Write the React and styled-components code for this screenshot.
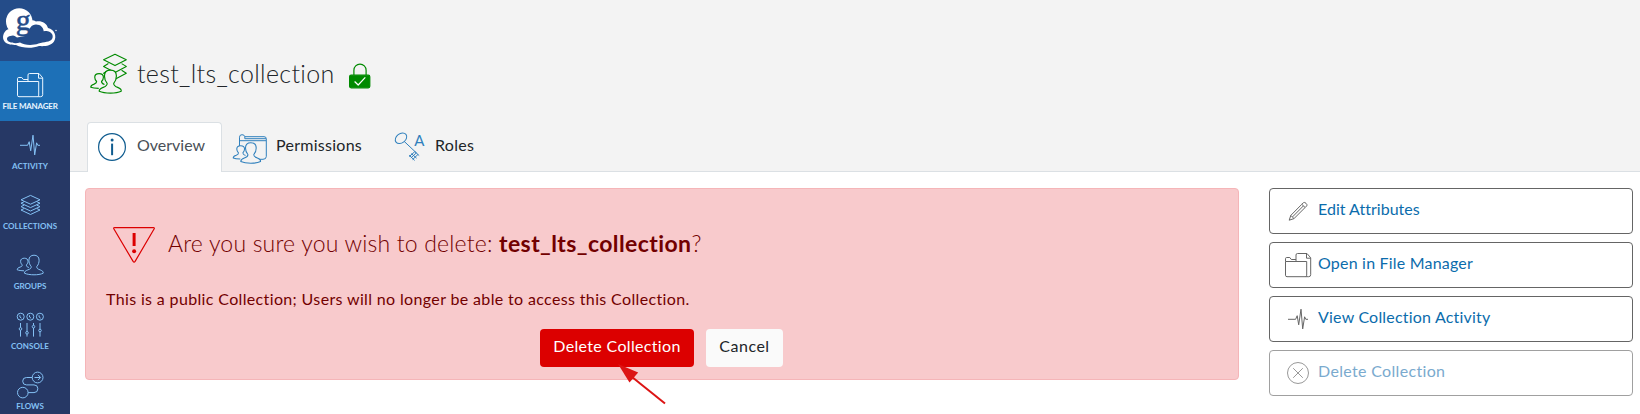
import React from 'react';
import styled, { createGlobalStyle } from 'styled-components';

const GlobalStyle = createGlobalStyle`
  *, *::before, *::after { box-sizing: border-box; }
  body {
    margin: 0;
    background: #fff;
    font-family: Lato, "Noto Sans", sans-serif;
    font-size: 16px;
    font-variant-ligatures: none;
    color: #212529;
    overflow: hidden;
  }
`;

const Page = styled.div`
  display: flex;
  width: 100%;
  height: 414px;
  overflow: hidden;
`;

const Sidebar = styled.nav`
  flex: 0 0 70px;
  background: #263865;
`;

const LogoLink = styled.div`
  height: 61px;
  background: #244c89;
`;

const NavItem = styled.div`
  display: flex;
  flex-direction: column;
  align-items: center;
  height: 60px;
  padding: 9px 10px 0 0;
  background: ${(p) => (p.$active ? '#1d70b7' : 'transparent')};
  color: ${(p) => (p.$active ? '#eaf5ff' : '#84c1f5')};
`;

const NavLabel = styled.span`
  margin-top: 1px;
  font-size: 8px;
  line-height: 10px;
  font-weight: 700;
  letter-spacing: ${(p) => p.$spacing || 0}px;
  white-space: nowrap;
`;

const Icon = styled.svg`
  display: block;
  flex: none;
  fill: none;
  stroke: ${(p) => p.$color || 'currentColor'};
  stroke-width: ${(p) => p.$weight || 1};
  stroke-linejoin: round;
`;

const Main = styled.main`
  flex: 1;
  min-width: 0;
`;

const Header = styled.header`
  display: flex;
  flex-direction: column;
  justify-content: space-between;
  height: 172px;
  padding: 50px 0 0 16px;
  background: #f3f3f3;
  border-bottom: 1px solid #dbe0e4;
`;

const TitleRow = styled.div`
  display: flex;
  align-items: flex-start;
  height: 46px;
`;

const Title = styled.h1`
  margin: 0 0 0 7px;
  width: 212px;
  font-size: 25px;
  line-height: 46px;
  font-weight: 300;
  letter-spacing: 0.34px;
`;

const LockIcon = styled(Icon)`
  margin-top: 13px;
`;

const Tabs = styled.div`
  display: flex;
  margin: 0 0 -1px 1px;
`;

const Tab = styled.div`
  display: flex;
  height: 50px;
  width: ${(p) => p.$width}px;
  padding: 6px 0 0 9px;
  gap: ${(p) => p.$gap}px;
  border: 1px solid ${(p) => (p.$active ? '#dbe0e4' : 'transparent')};
  border-bottom: 0;
  border-radius: 4px 4px 0 0;
  background: ${(p) => (p.$active ? '#fff' : 'transparent')};
  color: ${(p) => (p.$active ? '#495057' : '#212529')};
  line-height: 32px;
  letter-spacing: ${(p) => p.$spacing}px;
`;

const Body = styled.div`
  display: flex;
  justify-content: space-between;
  align-items: flex-start;
  padding: 16px 7px 0 15px;
`;

const Alert = styled.section`
  width: 1154px;
  height: 192px;
  padding: 37px 20px 0;
  border: 1px solid #f5b5b8;
  border-radius: 4px;
  background: #f8cacc;
  color: #720000;
`;

const AlertHeading = styled.h2`
  display: flex;
  margin: 0;
  padding-left: 6px;
  gap: 12px;
  font-size: 23px;
  line-height: 34px;
  font-weight: 300;
  letter-spacing: 0.19px;
  white-space: pre;
`;

const Name = styled.strong`
  font-weight: 700;
  letter-spacing: 0.4px;
`;

const AlertText = styled.p`
  margin: 23px 0 0;
  line-height: 24px;
  letter-spacing: 0.355px;
`;

const Actions = styled.div`
  position: relative;
  display: flex;
  gap: 12px;
  margin: 18px 0 0 434px;
`;

const Button = styled.button`
  height: 38px;
  width: ${(p) => p.$width}px;
  padding: 0 0 5px;
  border: 0;
  border-radius: 4px;
  background: ${(p) => (p.$danger ? '#dc0000' : '#fafafa')};
  color: ${(p) => (p.$danger ? '#fff' : '#212529')};
  font: inherit;
  letter-spacing: ${(p) => p.$spacing}px;
`;

const Pointer = styled.svg`
  position: absolute;
  left: 74px;
  top: 32px;
`;

const SideActions = styled.aside`
  display: flex;
  flex-direction: column;
  gap: 8px;
  width: 364px;
`;

const SideButton = styled.div`
  display: flex;
  align-items: center;
  gap: 5px;
  height: 46px;
  padding-left: 13px;
  border: 1px solid ${(p) => (p.$disabled ? '#a0a0a0' : '#656565')};
  border-radius: 4px;
  color: ${(p) => (p.$disabled ? '#7aaace' : '#0b6cac')};
`;

const SideLabel = styled.span`
  padding-bottom: 5px;
  letter-spacing: ${(p) => p.$spacing}px;
`;

const LayersShape = () => (
  <>
    <path d="M15.5 5.4 25 9.8 15.5 14.2 6 9.8Z" />
    <path d="M9.2 11.7 6 13.2 15.5 17.6 25 13.2 21.8 11.7" />
    <path d="M9.2 15.1 6 16.6 15.5 21 25 16.6 21.8 15.1" />
    <path d="M9.2 18.5 6 20 15.5 24.5 25 20 21.8 18.5" />
  </>
);

const PeopleShape = ({ fill = 'none' }) => (
  <>
    <path fill={fill} d="M9 20.8C6.2 20.7 3.7 20.4 2.2 19.8C2.2 18.2 3.5 17.6 5.1 17.1C6.7 16.5 7.3 16.2 7.2 14.9C6.1 13.8 5.6 12.6 5.6 11.3C5.6 9.3 7 8.2 9.3 8.2S13 9.3 13 11.3C13 12.6 12.5 13.8 11.4 14.9C11.3 16.5 12 16.8 13.9 17.5" />
    <path fill={fill} d="M16.2 16.5C14.6 14.7 13.9 12.6 13.9 10.2C13.9 7 15.9 5.2 19 5.2S24.1 7 24.1 10.2C24.1 12.6 23.4 14.7 21.8 16.5C21.6 18.6 23 19.1 25.2 19.9C27.4 20.7 28.5 21.8 28.2 23.2C25.8 24.4 22.4 24.8 19 24.8S11.8 24.3 9.4 23.2C9.3 21.6 10.6 20.7 12.8 19.9C15 19.1 16.4 18.6 16.2 16.5Z" />
  </>
);

const FolderShape = () => (
  <>
    <path d="M2.5 11.5H23.7V25.2Q23.7 26.7 22.2 26.7H4Q2.5 26.7 2.5 25.2Z" />
    <path d="M2.5 11.5V8.7Q2.5 7.5 3.7 7.5H6.8L8.3 9.5H13" />
    <path d="M13 11V5Q13 3.5 14.5 3.5H24L27.7 7.8V24.7Q27.7 26.7 25.7 26.7H22.5M23.5 3.8V8.2H27.5" />
  </>
);

const PulseShape = () => (
  <path d="M5 15.3H12.6L14.2 11.7 15.7 20.8 18 5.2 19.7 24.9 21.6 12.8 22.8 15.3H25" />
);

const ConsoleShape = () => (
  <>
    {[5.7, 15.3, 24.9].map((x) => (
      <g key={x}>
        <circle cx={x} cy="6.7" r="3.5" />
        <path d={`M${x - 0.8} 5.3V7L${x + 0.8} 8.2`} />
      </g>
    ))}
    <path d="M5.5 13V17.6M5.5 20.2V26.6M12 13V21.5M12 24.1V26.6M18.5 13V15.4M18.5 18V26.6M25 13V19.2M25 21.8V26.6" />
    {[[5.5, 18.9], [12, 22.8], [18.5, 16.7], [25, 20.5]].map(([x, y]) => (
      <circle key={x} cx={x} cy={y} r="1.3" />
    ))}
  </>
);

const FlowsShape = () => (
  <>
    <circle cx="7.8" cy="22.6" r="5.3" />
    <circle cx="22.6" cy="7.5" r="5.4" />
    <path d="M17.2 7.5H11.4A3.7 3.7 0 0 0 11.4 14.9H19A3.85 3.85 0 0 1 19 22.6H13.1M19.5 7.5H25.4M23 4.9 25.6 7.5 23 10.1" />
  </>
);

const PencilShape = () => (
  <>
    <path d="M6.2 24.2 7.8 19.4 18.8 8.3 22.1 11.5 11 22.6Z M7.8 19.4 11 22.6M9.5 20.9 20.4 9.9" />
    <path d="M18.8 8.3 20.5 6.6Q21.6 6 23 7.3T23.8 9.8L22.1 11.5" />
  </>
);

const CancelShape = () => (
  <>
    <circle cx="15" cy="15" r="10.5" />
    <path d="M10.2 10.2 19.8 19.8M19.8 10.2 10.2 19.8" />
  </>
);

const Logo = () => (
  <svg width="60" height="61" viewBox="0 0 60 61">
    <circle cx="19.2" cy="21.4" r="13.2" fill="#fff" />
    <path
      fill="#fff"
      d="M7.5 29.5C3 32 1.8 38 4.5 41.5C7.5 45 12.5 44.8 16 45C22 48.2 32 48.8 39 46C44 46.5 51 46 54 41.5C57.2 36.5 54.5 29.5 48 28C46.5 23 41.5 20.5 36 21.5C32 19 27 21 25 24Z"
    />
    <path
      fill="#244c89"
      d="M29 33.5C28.5 28.5 31.5 24.5 36 24.5C40.5 24.5 43.4 27.3 43.7 31.3C49.5 29.5 54.3 34 52.3 38.5C50 43 44 41.3 38.5 43.6C32 46 24 45.2 20 42.5C15 44.2 7 42.6 7 39C7 36 11.5 35.3 15.5 35.5L25 35Z"
    />
    <path fill="#fff" d="M10 33 17 37.5 25 36 29.5 30 20 24Z" />
    <text x="15.8" y="30" fill="#244c89" stroke="#244c89" strokeWidth=".5" fontFamily="Liberation Serif, serif" fontSize="30">g</text>
    <circle cx="56" cy="30.5" r=".7" fill="#fff" />
  </svg>
);

const navItems = [
  { label: 'FILE MANAGER', Shape: FolderShape, active: true, spacing: -0.22 },
  { label: 'ACTIVITY', Shape: PulseShape, spacing: 0 },
  { label: 'COLLECTIONS', Shape: LayersShape, spacing: 0.03 },
  { label: 'GROUPS', Shape: PeopleShape, spacing: 0 },
  { label: 'CONSOLE', Shape: ConsoleShape, spacing: 0.08 },
  { label: 'FLOWS', Shape: FlowsShape, spacing: 0 },
];

const sideItems = [
  { label: 'Edit Attributes', Shape: PencilShape, spacing: 0.02 },
  { label: 'Open in File Manager', Shape: FolderShape, spacing: 0.2 },
  { label: 'View Collection Activity', Shape: PulseShape, spacing: 0.2 },
  { label: 'Delete Collection', Shape: CancelShape, spacing: 0.33, disabled: true },
];

export default function App() {
  return (
    <Page>
      <GlobalStyle />
      <Sidebar>
        <LogoLink><Logo /></LogoLink>
        {navItems.map(({ label, Shape, active, spacing }) => (
          <NavItem key={label} $active={active}>
            <Icon width="30" height="30" viewBox="0 0 30 30"><Shape /></Icon>
            <NavLabel $spacing={spacing}>{label}</NavLabel>
          </NavItem>
        ))}
      </Sidebar>
      <Main>
        <Header>
          <TitleRow>
            <Icon $color="#008a00" $weight="1.1" width="44" height="46" viewBox="0 0 44 46">
              <path d="M29 4.2 40.3 9.8 29 15.6 17.6 9.8Z" />
              <path d="M22.4 13.6 17.6 16.4 29 22.4 40.3 16.4 35.6 13.6" />
              <path d="M22.4 20.2 17.6 23.2 29 29.2 40.3 23.2 35.6 20.2" />
              <g transform="translate(2.2 14.1) scale(1.17)" strokeWidth="1"><PeopleShape fill="#f3f3f3" /></g>
            </Icon>
            <Title>test_lts_collection</Title>
            <LockIcon $color="#008a00" $weight="1.2" width="22" height="26" viewBox="0 0 22 26">
              <path d="M4.9 12V7.2a6.1 6.1 0 0 1 12.2 0V12" />
              <rect x=".6" y="12.2" width="20.2" height="12.6" rx="1.5" fill="#008a00" />
              <path d="M5.6 18.5 9.2 22 16.3 14.4" stroke="#fff" />
            </LockIcon>
          </TitleRow>
          <Tabs>
            <Tab $active $width={135} $gap={10} $spacing={0}>
              <Icon $color="#0f5c8f" width="30" height="34" viewBox="0 0 30 34">
                <circle cx="15" cy="18" r="13.4" strokeWidth="1.2" />
                <path d="M15.1 14.6V26.2" strokeWidth="2" />
                <circle cx="15.1" cy="11" r="1.5" fill="#0f5c8f" stroke="none" />
              </Icon>
              Overview
            </Tab>
            <Tab $width={162} $gap={8} $spacing={0.27}>
              <Icon $color="#3080bd" width="36" height="36" viewBox="0 0 36 36">
                <path d="M7.5 17V8.2Q7.5 5.7 10 5.7Q12.5 5.7 12.8 7.7H32Q34.3 7.7 34.3 9.7V27.5Q34.3 30.3 31 30.3H26M12.8 7.7V9.7H34M7.5 11.7H34" />
                <g transform="translate(-1.1 8.2) scale(1.05)"><PeopleShape fill="#f3f3f3" /></g>
              </Icon>
              Permissions
            </Tab>
            <Tab $width={104} $gap={7} $spacing={0.3}>
              <Icon $color="#3080bd" width="34" height="34" viewBox="0 0 34 34">
                <ellipse cx="7" cy="9.2" rx="6.3" ry="4.6" transform="rotate(-38 7 9.2)" />
                <path d="M10.2 12.4 22.4 23.9M20.9 22.6 15.2 27.6M22.4 23.9 16.8 29M24 25.4 18.6 30.6M20.9 22.6 25.2 26.6M15.2 26.2 20.6 31.4M17.4 24.6 22.6 29.2" />
                <text x="20.3" y="17" fill="#3080bd" stroke="none" fontFamily="Lato" fontSize="15" letterSpacing="0">A</text>
              </Icon>
              Roles
            </Tab>
          </Tabs>
        </Header>
        <Body>
          <Alert>
            <AlertHeading>
              <Icon $color="#dc0000" $weight="1.2" width="44" height="38" viewBox="0 0 44 38">
                <path d="M2.6 1.7H41.5Q42.7 1.7 42.2 2.8L23.1 35.4Q22.1 36.9 21.1 35.4L1.8 2.8Q1.3 1.7 2.6 1.7Z" />
                <path d="M22.1 7V20" strokeWidth="3" />
                <circle cx="22.1" cy="25.2" r="2" fill="#dc0000" stroke="none" />
              </Icon>
              <span>Are you sure you wish to delete: <Name>test_lts_collection</Name>?</span>
            </AlertHeading>
            <AlertText>This is a public Collection; Users will no longer be able to access this Collection.</AlertText>
            <Actions>
              <Button $danger $width={154} $spacing={0.33}>Delete Collection</Button>
              <Button $width={77} $spacing={0.5}>Cancel</Button>
              <Pointer width="60" height="50" viewBox="0 0 60 50">
                <path d="M18 16 51 42.5" stroke="#dc1414" strokeWidth="2" />
                <path d="M4 3 24.2 11.5 15.5 21.5Z" fill="#dc1414" />
              </Pointer>
            </Actions>
          </Alert>
          <SideActions>
            {sideItems.map(({ label, Shape, spacing, disabled }) => (
              <SideButton key={label} $disabled={disabled}>
                <Icon $color={disabled ? '#999' : '#666'} width="30" height="30" viewBox="0 0 30 30"><Shape /></Icon>
                <SideLabel $spacing={spacing}>{label}</SideLabel>
              </SideButton>
            ))}
          </SideActions>
        </Body>
      </Main>
    </Page>
  );
}
